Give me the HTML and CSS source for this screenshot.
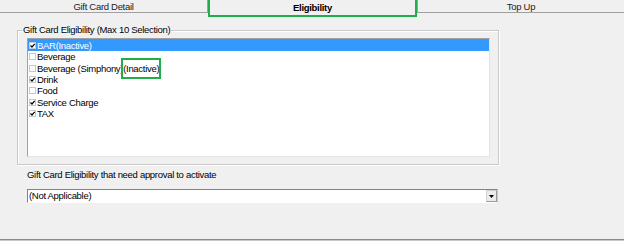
FILE: index.html
```html
<!DOCTYPE html>
<html>
<head>
<meta charset="utf-8">
<link rel="stylesheet" href="styles.css">
</head>
<body>
<div class="page">
  <div class="tabs">
    <div class="tab tab-first">Gift Card Detail</div>
    <div class="tab tab-active">Eligibility</div>
    <div class="tab tab-last">Top Up</div>
  </div>

  <fieldset class="group">
    <legend class="legend">Gift Card Eligibility (Max 10 Selection)</legend>
    <div class="listbox">
      <div class="row selected"><svg class="chk" width="7" height="7" viewBox="0 0 7 7"><rect x="0.5" y="0.5" width="6" height="6" fill="#fff" stroke="#c8c8c8"/><path d="M1.5 3.5 L3 5 L5.7 1.8" fill="none" stroke="#000" stroke-width="1.2"/></svg><span>BAR(Inactive)</span></div>
      <div class="row"><svg class="chk" width="7" height="7" viewBox="0 0 7 7"><rect x="0.5" y="0.5" width="6" height="6" fill="#fff" stroke="#c8c8c8"/></svg><span>Beverage</span></div>
      <div class="row"><svg class="chk" width="7" height="7" viewBox="0 0 7 7"><rect x="0.5" y="0.5" width="6" height="6" fill="#fff" stroke="#c8c8c8"/></svg><span>Beverage (Simphony)<span class="mark">(Inactive)</span></span></div>
      <div class="row"><svg class="chk" width="7" height="7" viewBox="0 0 7 7"><rect x="0.5" y="0.5" width="6" height="6" fill="#fff" stroke="#c8c8c8"/><path d="M1.5 3.5 L3 5 L5.7 1.8" fill="none" stroke="#000" stroke-width="1.2"/></svg><span>Drink</span></div>
      <div class="row"><svg class="chk" width="7" height="7" viewBox="0 0 7 7"><rect x="0.5" y="0.5" width="6" height="6" fill="#fff" stroke="#c8c8c8"/></svg><span>Food</span></div>
      <div class="row"><svg class="chk" width="7" height="7" viewBox="0 0 7 7"><rect x="0.5" y="0.5" width="6" height="6" fill="#fff" stroke="#c8c8c8"/><path d="M1.5 3.5 L3 5 L5.7 1.8" fill="none" stroke="#000" stroke-width="1.2"/></svg><span>Service Charge</span></div>
      <div class="row"><svg class="chk" width="7" height="7" viewBox="0 0 7 7"><rect x="0.5" y="0.5" width="6" height="6" fill="#fff" stroke="#c8c8c8"/><path d="M1.5 3.5 L3 5 L5.7 1.8" fill="none" stroke="#000" stroke-width="1.2"/></svg><span>TAX</span></div>
    </div>
  </fieldset>

  <div class="label">Gift Card Eligibility that need approval to activate</div>
  <div class="combo">
    <span class="combo-text">(Not Applicable)</span>
    <span class="combo-btn"><svg width="5" height="3" viewBox="0 0 5 3"><path d="M0 0 H5 L2.5 3 Z" fill="#000"/></svg></span>
  </div>

  <div class="bottom-line"></div>
</div>
</body>
</html>
```

FILE: styles.css
```css
html, body {
  margin: 0;
  padding: 0;
  background: #f0f0f0;
}
body {
  font-family: "Liberation Sans", Arial, sans-serif;
  font-size: 9.5px;
  letter-spacing: -0.3px;
  color: #000;
}
.page {
  width: 624px;
  height: 241px;
  display: flex;
  flex-direction: column;
  overflow: hidden;
}
.tabs {
  display: flex;
  height: 13px;
  align-items: flex-start;
  flex: none;
}
.tab {
  box-sizing: border-box;
  height: 13px;
  padding-top: 1px;
  line-height: 12px;
  text-align: center;
  border-bottom: 1px solid #a0a0a0;
  background: #f0f0f0;
  color: #222;
}
.tab-first {
  width: 208px;
  border-right: 1px solid #a0a0a0;
}
.tab-active {
  width: 209px;
  height: 19px;
  margin-top: -2px;
  padding-top: 3px;
  border: 2px solid #1fae4a;
  font-weight: bold;
  line-height: 10px;
  color: #000;
  position: relative;
  z-index: 1;
}
.tab-last {
  flex: 1;
  border-left: 1px solid #a0a0a0;
}
.group {
  box-sizing: border-box;
  width: 482px;
  margin: 11px 0 0 17px;
  padding: 2px 0 7px 9px;
  border: 1px solid #c9c9c9;
  box-shadow: inset 1px 1px 0 #fff, 1px 1px 0 #fff;
  flex: none;
}
.legend {
  margin-left: -5px;
  padding: 0 1px;
  line-height: 12px;
}
.listbox {
  box-sizing: border-box;
  width: 463px;
  height: 119px;
  background: #fff;
  border-top: 1px solid #a0a0a0;
  border-left: 1px solid #a0a0a0;
  border-right: 1px solid #e3e3e3;
  border-bottom: 1px solid #e3e3e3;
}
.row {
  display: flex;
  align-items: center;
  height: 11.4px;
  line-height: 11px;
  white-space: nowrap;
}
.row.selected {
  height: 12px;
  background: #3399ff;
  color: #fff;
}
.chk {
  flex: none;
  margin: 0 1px 0 1px;
}
.mark {
  position: relative;
}
.mark::after {
  content: "";
  position: absolute;
  left: -2px;
  right: -2px;
  top: -5px;
  bottom: -5px;
  border: 2px solid #1fae4a;
}
.label {
  margin: 4px 0 0 27px;
  line-height: 12px;
  flex: none;
}
.combo {
  box-sizing: border-box;
  width: 471px;
  height: 14px;
  margin: 8px 0 0 27px;
  background: #fff;
  border-top: 1px solid #828282;
  border-left: 1px solid #828282;
  border-right: 1px solid #c8c8c8;
  border-bottom: 1px solid #fff;
  display: flex;
  align-items: center;
  justify-content: space-between;
  flex: none;
}
.combo-text {
  padding-left: 1px;
  line-height: 12px;
}
.combo-btn {
  box-sizing: border-box;
  width: 11px;
  height: 12px;
  background: #ececec;
  border: 1px solid #d0d0d0;
  border-right-color: #9a9a9a;
  border-bottom-color: #9a9a9a;
  display: flex;
  align-items: center;
  justify-content: center;
}
.bottom-line {
  margin-top: auto;
  height: 2px;
  box-sizing: border-box;
  border-top: 1px solid #8a8a8a;
  background: #c8c8c8;
  flex: none;
}
```
